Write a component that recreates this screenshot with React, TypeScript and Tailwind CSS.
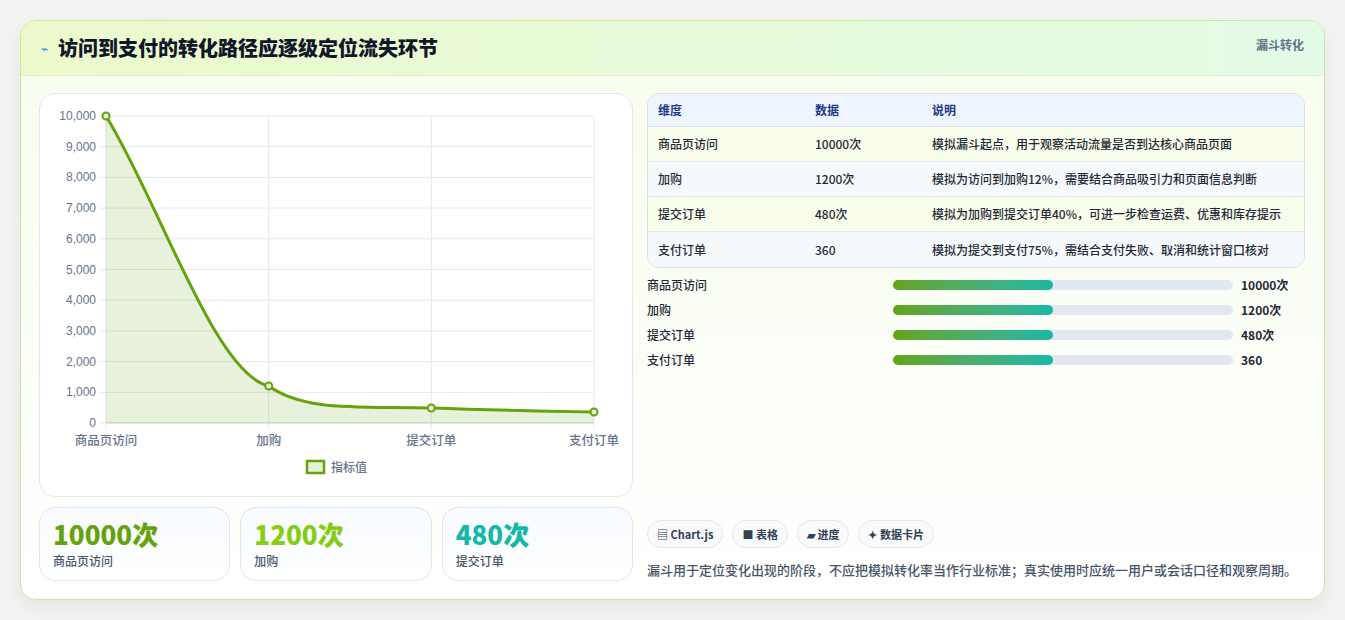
import React from "react";

const rows = [
  { name: "商品页访问", value: "10000次", note: "模拟漏斗起点，用于观察活动流量是否到达核心商品页面" },
  { name: "加购", value: "1200次", note: "模拟为访问到加购12%，需要结合商品吸引力和页面信息判断" },
  { name: "提交订单", value: "480次", note: "模拟为加购到提交订单40%，可进一步检查运费、优惠和库存提示" },
  { name: "支付订单", value: "360", note: "模拟为提交到支付75%，需结合支付失败、取消和统计窗口核对" },
];

const font = { fontFamily: '"Noto Sans CJK SC", "Noto Sans", sans-serif' };

function Chart() {
  const x0 = 66, x1 = 554, y0 = 22, y1 = 329;
  const ys = Array.from({ length: 11 }, (_, i) => i);
  const xs = [66, 228.7, 391.3, 554];
  const labels = ["商品页访问", "加购", "提交订单", "支付订单"];
  const pts = [[66, 22], [228.7, 292], [391.3, 314], [554, 318]];
  const line = "M66,22 C120,110 175,280 228.7,292 C265,318 320,312 391.3,314 C450,316 500,317 554,318";
  return (
    <svg width="594" height="403" className="block">
      {ys.map((i) => {
        const y = y1 - (i * (y1 - y0)) / 10;
        return (
          <g key={i}>
            <line x1={x0 - 6} x2={x1} y1={y} y2={y} stroke="#e2e8f0" />
            <text x={56} y={y + 4} textAnchor="end" fontSize="12" fill="#64748b" fontFamily="Liberation Sans, sans-serif">
              {(i * 1000).toLocaleString("en-US")}
            </text>
          </g>
        );
      })}
      {xs.map((x, i) => (
        <g key={i}>
          <line x1={x} x2={x} y1={y0} y2={y1 + 6} stroke="#e2e8f0" />
          <text x={x} y={351} textAnchor="middle" fontSize="12.5" fontWeight="500" fill="#64748b" style={font}>{labels[i]}</text>
        </g>
      ))}
      <line x1={x0} x2={x1} y1={y1} y2={y1} stroke="#cbd5e1" />
      <path d={line + ` L554,${y1} L66,${y1} Z`} fill="#65a30d" fillOpacity="0.15" />
      <path d={line} fill="none" stroke="#65a30d" strokeWidth="3" />
      {pts.map(([x, y], i) => (
        <circle key={i} cx={x} cy={y} r="3.5" fill="#e5efd9" stroke="#65a30d" strokeWidth="2" />
      ))}
      <rect x={267} y={367} width={17} height={12} fill="#e6efd8" stroke="#65a30d" strokeWidth="2.5" />
      <text x={291} y={378} fontSize="12" fontWeight="500" fill="#64748b" style={font}>指标值</text>
    </svg>
  );
}

export default function App() {
  return (
    <div className="min-h-[620px] bg-[#f3f4f1] p-5 pb-0" style={font}>
      <div className="h-[580px] rounded-2xl border border-[#c9e89a] bg-gradient-to-b from-[#f7fdec] to-white shadow-[0_8px_20px_rgba(0,0,0,0.06)] overflow-hidden">
        <div className="flex h-[55px] items-start justify-between border-b border-[#e1ecd3] bg-gradient-to-r from-[#ecfacb] to-[#e3fbe6] px-5">
          <div className="flex items-center gap-[10px] pt-[12px]">
            <span className="text-[12px] text-[#3b82f6]">⌁</span>
            <h1 className="text-[20px] font-black text-[#0f172a]">访问到支付的转化路径应逐级定位流失环节</h1>
          </div>
          <span className="pt-[15px] text-[12px] font-bold text-[#64748b]">漏斗转化</span>
        </div>
        <div className="flex gap-[14px] px-[18px] pt-[17px]">
          <div className="w-[594px] shrink-0">
            <div className="h-[404px] rounded-2xl border border-[#e2e8f0] bg-white">
              <Chart />
            </div>
            <div className="mt-[10px] flex gap-[10px]">
              {[
                ["10000次", "商品页访问", "text-[#65a30d]"],
                ["1200次", "加购", "text-[#84cc16]"],
                ["480次", "提交订单", "text-[#14b8a6]"],
              ].map(([v, l, c]) => (
                <div key={l} className="h-[74px] flex-1 rounded-2xl border border-[#dbe6f3] bg-gradient-to-b from-[#f8fbff] to-white px-[13px] pt-[8px]">
                  <div className={`text-[26px] font-black leading-[36px] ${c}`}>{v}</div>
                  <div className="text-[12px] font-medium text-[#475569]">{l}</div>
                </div>
              ))}
            </div>
          </div>
          <div className="flex w-[658px] flex-col">
            <div className="overflow-hidden rounded-xl border border-[#d6e0ec] text-[12px] font-medium">
              <div className="flex h-[33px] items-center border-b border-[#d6e0ec] bg-[#eef5ff] font-bold text-[#1e3a8a]">
                <div className="w-[167px] pl-[10px]">维度</div>
                <div className="w-[117px]">数据</div>
                <div>说明</div>
              </div>
              {rows.map((r, i) => (
                <div key={r.name} className={`flex h-[35px] items-center text-[#1f2937] ${i % 2 === 0 ? "bg-[#f7fdea]" : "bg-[#f6f9fc]"} ${i < 3 ? "border-b border-[#e2e8f0]" : ""}`}>
                  <div className="w-[167px] pl-[10px]">{r.name}</div>
                  <div className="w-[117px]">{r.value}</div>
                  <div>{r.note}</div>
                </div>
              ))}
            </div>
            <div className="mt-[8px] flex flex-col gap-[7px]">
              {rows.map((r) => (
                <div key={r.name} className="flex h-[18px] items-center text-[12px] font-medium text-[#1f2937]">
                  <div className="w-[246px]">{r.name}</div>
                  <div className="h-[10px] w-[340px] rounded-full bg-[#e2e8f0]">
                    <div className="h-full w-[160px] rounded-full bg-gradient-to-r from-[#65a30d] to-[#14b8a6]" />
                  </div>
                  <div className="ml-[8px] font-bold">{r.value}</div>
                </div>
              ))}
            </div>
            <div className="mt-auto flex gap-[9px] pb-[8px]">
              {["▤ Chart.js", "■ 表格", "▰ 进度", "✦ 数据卡片"].map((t) => (
                <span key={t} className="rounded-full border border-[#e2e8f0] bg-[#f8fafc] px-[9px] py-[5px] text-[11px] font-bold text-[#334155]">{t}</span>
              ))}
            </div>
            <p className="pt-[3px] text-[13px] font-medium leading-[22px] text-[#475569]">漏斗用于定位变化出现的阶段，不应把模拟转化率当作行业标准；真实使用时应统一用户或会话口径和观察周期。</p>
          </div>
        </div>
      </div>
    </div>
  );
}
